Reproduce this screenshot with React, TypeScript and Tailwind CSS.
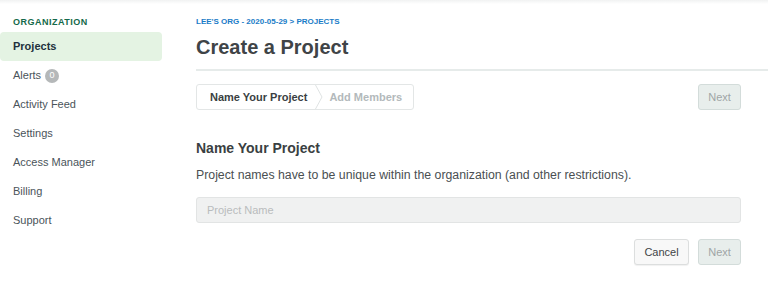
import React from "react";

const font = { fontFamily: '"Liberation Sans", Arial, sans-serif' };

function NavItem({ label, active, badge }: { label: string; active?: boolean; badge?: string }) {
  return (
    <div
      className={
        "h-[29px] flex items-center pl-[13px] rounded-[4px] text-[11px] " +
        (active ? "bg-[#e4f3e3] text-[#21313c] font-bold" : "text-[#4a545a]")
      }
    >
      <span>{label}</span>
      {badge !== undefined && (
        <span className="ml-[4px] w-[14px] h-[14px] rounded-full bg-[#b5b8b9] text-white text-[9px] flex items-center justify-center">
          {badge}
        </span>
      )}
    </div>
  );
}

export default function App() {
  return (
    <div style={font} className="w-[768px] h-[288px] bg-white relative overflow-hidden">
      <div className="absolute top-0 left-0 right-0 h-[4px] bg-gradient-to-b from-[#f1f2f2] to-white" />
      <div className="flex h-full">
        <aside className="w-[162px] shrink-0 pt-[17px]">
          <div className="pl-[13px] h-[12px] flex items-center text-[9px] font-bold tracking-[0.5px] text-[#14694a] mb-[3px]">
            ORGANIZATION
          </div>
          <NavItem label="Projects" active />
          <NavItem label="Alerts" badge="0" />
          <NavItem label="Activity Feed" />
          <NavItem label="Settings" />
          <NavItem label="Access Manager" />
          <NavItem label="Billing" />
          <NavItem label="Support" />
        </aside>
        <main className="flex-1 ml-[34px]">
          <div className="pt-[17px]">
            <div className="h-[10px] flex items-center text-[8px] font-bold text-[#1a7cc7]">
              LEE'S ORG - 2020-05-29 &gt; PROJECTS
            </div>
            <h1 className="mt-[8px] h-[24px] flex items-center text-[20px] font-bold text-[#3f4447]">
              Create a Project
            </h1>
            <div className="mt-[10px] h-[2px] bg-[#e6ebea]" />
          </div>
          <div className="pr-[27px]">
            <div className="mt-[13px] flex items-center justify-between">
              <div className="flex h-[26px] border border-[#e3e6e6] rounded-[3px] items-stretch">
                <div className="pl-[13px] pr-[8px] flex items-center text-[11px] font-bold text-[#3a3f42]">
                  Name Your Project
                </div>
                <svg width="8" height="24" viewBox="0 0 8 24" className="shrink-0">
                  <path d="M0.5 0 L7 12 L0.5 24" fill="none" stroke="#dfe3e3" strokeWidth="1" />
                </svg>
                <div className="pl-[6px] pr-[11px] flex items-center text-[11px] font-bold text-[#b3b9bb]">
                  Add Members
                </div>
              </div>
              <button className="w-[43px] h-[26px] rounded-[3px] border border-[#d3dcda] bg-[#e8eeec] text-[11px] text-[#9fa5a6]">
                Next
              </button>
            </div>
            <h2 className="mt-[30px] h-[17px] flex items-center text-[14px] font-bold text-[#3a3f42]">
              Name Your Project
            </h2>
            <p className="mt-[10px] h-[16px] flex items-center text-[12.3px] text-[#4a4f52]">
              Project names have to be unique within the organization (and other restrictions).
            </p>
            <div className="mt-[14px] h-[26px] rounded-[3px] border border-[#e2e4e4] bg-[#f0f1f1] flex items-center pl-[10px] text-[11px] text-[#b9bcbd]">
              Project Name
            </div>
            <div className="mt-[16px] flex justify-end gap-[9px]">
              <button className="w-[55px] h-[26px] rounded-[3px] border border-[#dcdede] bg-[#f8f8f8] shadow-[0_1px_1px_rgba(0,0,0,0.06)] text-[11px] text-[#3f4447]">
                Cancel
              </button>
              <button className="w-[43px] h-[26px] rounded-[3px] border border-[#d3dcda] bg-[#e8eeec] text-[11px] text-[#9fa5a6]">
                Next
              </button>
            </div>
          </div>
        </main>
      </div>
    </div>
  );
}
